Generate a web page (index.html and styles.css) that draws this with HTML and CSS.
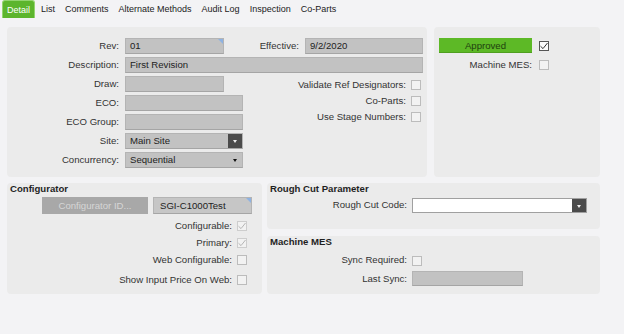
FILE: index.html
```html
<!doctype html>
<html lang="en">
<head>
  <meta charset="UTF-8">
  <title>Revision Detail</title>
  <link rel="stylesheet" href="styles.css">
</head>
<body>
  <div class="tabs">
    <div class="tab active">Detail</div>
    <div class="tab">List</div>
    <div class="tab">Comments</div>
    <div class="tab">Alternate Methods</div>
    <div class="tab">Audit Log</div>
    <div class="tab">Inspection</div>
    <div class="tab">Co-Parts</div>
  </div>

  <div class="content">
    <div class="row-top">
      <div class="panel main">
        <div class="lbl">Rev:</div>
        <div class="field short corner">01</div>
        <div class="pair">
          <div class="lbl">Effective:</div>
          <div class="field eff">9/2/2020</div>
        </div>

        <div class="lbl">Description:</div>
        <div class="field wide">First Revision</div>

        <div class="lbl">Draw:</div>
        <div class="field short"></div>
        <div class="checks">
          <div class="check-row"><span class="lbl">Validate Ref Designators:</span><span class="box"></span></div>
          <div class="check-row"><span class="lbl">Co-Parts:</span><span class="box"></span></div>
          <div class="check-row"><span class="lbl">Use Stage Numbers:</span><span class="box"></span></div>
        </div>

        <div class="lbl">ECO:</div>
        <div class="field"></div>

        <div class="lbl">ECO Group:</div>
        <div class="field"></div>

        <div class="lbl">Site:</div>
        <div class="field select">Main Site<span class="drop dark"></span></div>

        <div class="lbl">Concurrency:</div>
        <div class="field select">Sequential<span class="drop"></span></div>
      </div>

      <div class="panel status">
        <div class="approved">Approved</div>
        <span class="box checked">
          <svg width="8" height="8" viewBox="0 0 8 8"><path d="M0.5 4.2 L3 6.6 L7.5 1" fill="none" stroke="#333" stroke-width="1"/></svg>
        </span>
        <div class="lbl">Machine MES:</div>
        <span class="box"></span>
      </div>
    </div>

    <div class="row-bottom">
      <div class="panel config">
        <div class="head">Configurator</div>
        <div class="btn-row">
          <div class="btn-disabled">Configurator ID...</div>
          <div class="field cfg corner">SGI-C1000Test</div>
        </div>
        <div class="check-row c1"><span class="lbl">Configurable:</span><span class="box off"><svg width="8" height="8" viewBox="0 0 8 8"><path d="M0.5 4.2 L3 6.6 L7.5 1" fill="none" stroke="#b5b5b5" stroke-width="1"/></svg></span></div>
        <div class="check-row c1"><span class="lbl">Primary:</span><span class="box off"><svg width="8" height="8" viewBox="0 0 8 8"><path d="M0.5 4.2 L3 6.6 L7.5 1" fill="none" stroke="#b5b5b5" stroke-width="1"/></svg></span></div>
        <div class="check-row c1"><span class="lbl">Web Configurable:</span><span class="box"></span></div>
        <div class="check-row c1 last"><span class="lbl">Show Input Price On Web:</span><span class="box"></span></div>
      </div>

      <div class="side">
        <div class="panel rough">
          <div class="head">Rough Cut Parameter</div>
          <div class="form">
            <div class="lbl">Rough Cut Code:</div>
            <div class="field white select"><span class="drop dark"></span></div>
          </div>
        </div>
        <div class="panel mes">
          <div class="head">Machine MES</div>
          <div class="form">
            <div class="lbl">Sync Required:</div>
            <div><span class="box"></span></div>
            <div class="lbl">Last Sync:</div>
            <div class="field sync"></div>
          </div>
        </div>
      </div>
    </div>
  </div>
</body>
</html>
```

FILE: styles.css
```css
body {
    margin: 0;
    background: #f3f3f5;
    font-family: "Liberation Sans", Arial, sans-serif;
    font-size: 9.6px;
    color: #333;
}

.tabs {
    display: flex;
    height: 20px;
    padding-left: 2px;
    gap: 0;
}

.tab {
    height: 18px;
    line-height: 19px;
    padding: 0 5px;
    font-size: 9px;
    color: #222;
}

.tab.active {
    background: #5cb52d;
    border: 1px solid #93d46f;
    border-bottom: 0;
    border-radius: 3px 3px 0 0;
    color: #fff;
    height: 17px;
    line-height: 18px;
    padding: 0 4px;
    margin-right: 1px;
}

.content {
    padding: 7px 0 0 7px;
}

.row-top {
    display: flex;
    gap: 7px;
}

.row-bottom {
    display: flex;
    gap: 5px;
    margin-top: 6px;
}

.panel {
    background: #ebebeb;
    border-radius: 4px;
    box-sizing: border-box;
}

.lbl {
    text-align: right;
    white-space: nowrap;
    line-height: 16px;
}

.field {
    height: 16px;
    box-sizing: border-box;
    background: #c2c2c2;
    border: 1px solid #b4b4b4;
    border-bottom-color: #a5a5a5;
    line-height: 14px;
    padding-left: 4px;
    color: #222;
    position: relative;
}

.corner::after {
    content: "";
    position: absolute;
    top: 0;
    right: 0;
    border-top: 5px solid #8eb2e2;
    border-left: 5px solid transparent;
}

/* top left panel */
.main {
    width: 420px;
    height: 150px;
    padding: 11px 4px 0 0;
    display: grid;
    grid-template-columns: 112px 118px 174px;
    grid-auto-rows: 16px;
    column-gap: 6px;
    row-gap: 3px;
}

.main > .lbl {
    grid-column: 1;
}

.main > .field {
    grid-column: 2;
}

.main .short {
    width: 99px;
}

.main > .wide {
    grid-column: 2 / span 2;
}

.pair {
    grid-column: 3;
    grid-row: 1;
    display: flex;
    justify-content: flex-end;
    gap: 6px;
}

.field.eff {
    width: 118px;
}

.checks {
    grid-column: 3;
    grid-row: 3 / span 3;
    padding: 1px 2px 0 0;
}

.check-row {
    display: flex;
    justify-content: flex-end;
    align-items: center;
    gap: 5px;
    height: 16px;
}

.box {
    display: inline-flex;
    align-items: center;
    justify-content: center;
    width: 10px;
    height: 10px;
    box-sizing: border-box;
    border: 1px solid #bcbcbc;
    background: #f2f2f2;
}

.box.checked {
    border-color: #555;
    background: #fafafa;
}

.box.off {
    border-color: #cdcdcd;
}

.select {
    padding-right: 16px;
}

.drop {
    position: absolute;
    top: 0;
    right: 0;
    width: 14px;
    height: 14px;
}

.drop::after {
    content: "";
    position: absolute;
    left: 5px;
    top: 6px;
    border-top: 3px solid #111;
    border-left: 2px solid transparent;
    border-right: 2px solid transparent;
}

.drop.dark {
    background: #4b4b4b;
}

.drop.dark::after {
    border-top-color: #eee;
}

/* status panel */
.status {
    width: 166px;
    height: 150px;
    padding: 11px 0 0 5px;
    display: grid;
    grid-template-columns: 93px 10px;
    grid-auto-rows: 15px;
    column-gap: 7px;
    row-gap: 4px;
    align-content: start;
    align-items: center;
}

.approved {
    height: 15px;
    background: #5db926;
    border-bottom: 1px solid #4f9f1f;
    box-sizing: border-box;
    text-align: center;
    line-height: 15px;
    color: #1d3f0f;
}

/* bottom */
.head {
    font-weight: bold;
    color: #1f1f1f;
    line-height: 11px;
    padding-left: 3px;
}

.config {
    width: 255px;
    height: 111px;
}

.btn-row {
    display: flex;
    justify-content: flex-end;
    gap: 5px;
    margin-top: 3px;
    padding-right: 10px;
}

.btn-disabled {
    width: 106px;
    height: 17px;
    line-height: 17px;
    background: #a8a8a8;
    color: #d6d6d6;
    text-align: center;
}

.field.cfg {
    width: 99px;
    height: 17px;
    line-height: 15px;
    padding-left: 6px;
    background: #c6c6c6;
}

.check-row.c1 {
    height: 17px;
    padding-right: 15px;
}

.btn-row + .check-row {
    margin-top: 3px;
}

.check-row.last {
    margin-top: 3px;
}

.side {
    width: 333px;
    display: flex;
    flex-direction: column;
    gap: 7px;
}

.rough {
    height: 46px;
}

.mes {
    height: 58px;
}

.form {
    display: grid;
    grid-template-columns: 140px auto;
    column-gap: 5px;
    justify-content: start;
    align-items: center;
}

.rough .form {
    margin-top: 3px;
}

.field.white {
    width: 175px;
    height: 15px;
    background: #fff;
    border-color: #a0a0a0;
}

.field.white .drop {
    height: 13px;
}

.mes .form {
    margin-top: 5px;
    grid-template-rows: 16px 15px;
    row-gap: 3px;
}

.mes .box {
    vertical-align: middle;
    margin-top: 2px;
}

.field.sync {
    width: 111px;
    height: 15px;
}
```
